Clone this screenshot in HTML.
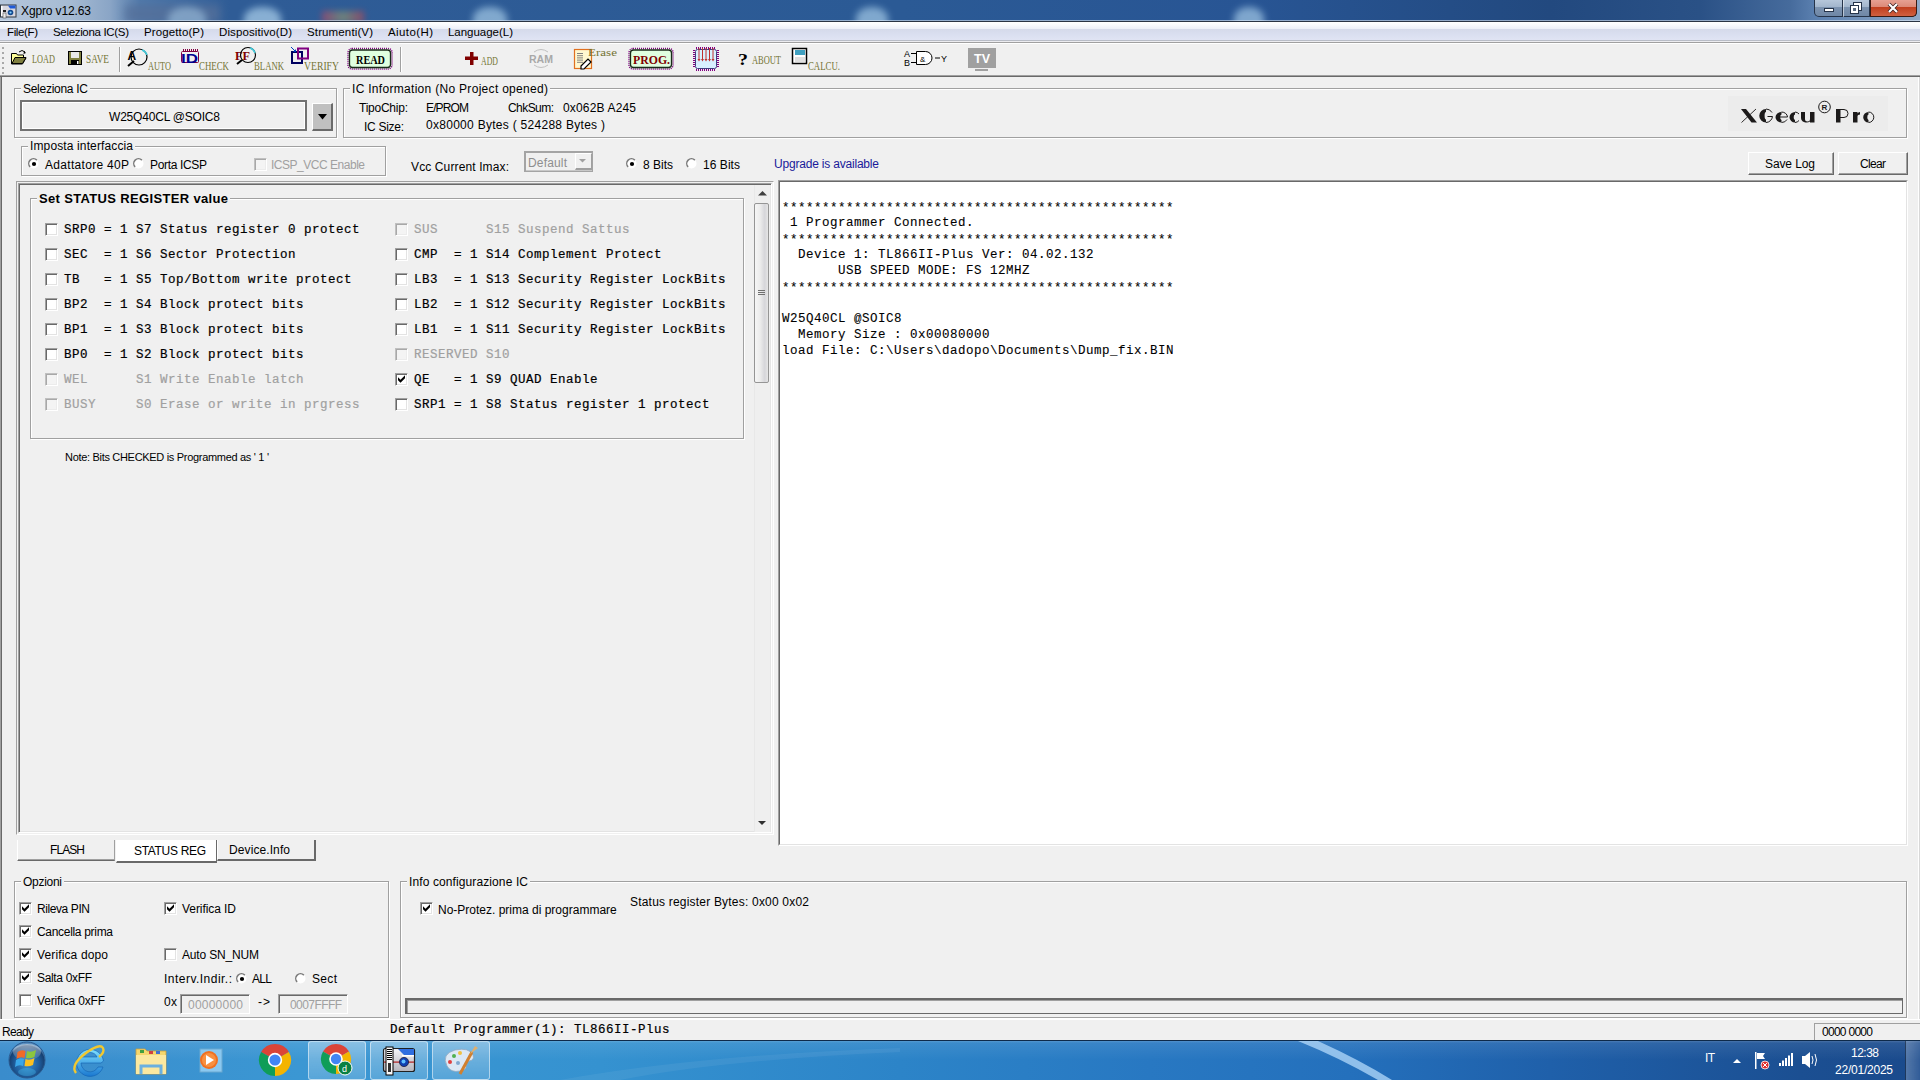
<!DOCTYPE html>
<html><head><meta charset="utf-8"><style>
html,body{margin:0;padding:0;width:1920px;height:1080px;overflow:hidden;background:#f0f0f0;position:relative;font-family:"Liberation Sans",sans-serif}
body>div,body>svg{position:absolute}
.t{white-space:pre;line-height:normal}
</style></head><body>
<div style="left:0;top:0;width:1920px;height:21px;background:linear-gradient(90deg,#b4c6db 0px,#a6bbd3 70px,#8aa5c6 110px,#5079aa 140px,#2f5c96 230px,#2b5a95 900px,#285594 1250px,#22497f 1550px,#2a5186 1700px,#466b9c 1790px,#5a7faf 1814px,#8fa9c8 1920px)"></div>
<div style="left:125px;top:5px;width:95px;height:18px;filter:blur(4px);background:#55709a;opacity:0.8"></div>
<div style="left:168px;top:7px;width:38px;height:22px;border-radius:50% 50% 0 0;filter:blur(3.5px);opacity:0.45;background:#b8dcf4"></div>
<div style="left:244px;top:7px;width:37px;height:22px;border-radius:50% 50% 0 0;filter:blur(3.5px);opacity:0.65;background:#b8dcf4"></div>
<div style="left:473px;top:7px;width:34px;height:22px;border-radius:50% 50% 0 0;filter:blur(3.5px);opacity:0.6;background:#b8dcf4"></div>
<div style="left:856px;top:7px;width:32px;height:22px;border-radius:50% 50% 0 0;filter:blur(3.5px);opacity:0.6;background:#b8dcf4"></div>
<div style="left:1234px;top:7px;width:30px;height:22px;border-radius:50% 50% 0 0;filter:blur(3.5px);opacity:0.6;background:#b8dcf4"></div>
<div style="left:322px;top:11px;width:42px;height:12px;filter:blur(3px);opacity:0.6;background:linear-gradient(90deg,#c04060,#90a070 50%,#c04050)"></div>
<div style="left:0px;top:20px;width:1920px;height:1px;background:rgba(220,232,245,0.6)"></div>
<div style="left:0px;top:21px;width:1920px;height:1px;background:#2a3444"></div>
<div style="left:1814px;top:-1px;width:103px;height:18px;border:1px solid #26344a;border-top:none;border-radius:0 0 5px 5px;box-sizing:border-box;overflow:hidden;background:linear-gradient(180deg,#b9c9dc 0,#a3b6cd 45%,#7c93b0 50%,#6f87a6 100%)"></div>
<div style="left:1870px;top:-1px;width:47px;height:18px;border:1px solid #3a1a12;border-top:none;border-radius:0 0 5px 0;box-sizing:border-box;background:linear-gradient(180deg,#e8a496 0,#dc8a78 45%,#c1401f 50%,#d06040 100%)"></div>
<div style="left:1842px;top:0px;width:1px;height:17px;background:#26344a"></div>
<div style="left:1843px;top:0px;width:1px;height:17px;background:rgba(255,255,255,0.5)"></div>
<div style="left:1869px;top:0px;width:1px;height:17px;background:#26344a"></div>
<div style="left:1824px;top:8px;width:10px;height:4px;background:#fff;border:1px solid #26344a;box-sizing:border-box"></div>
<svg style="left:1850px;top:2px" width="12" height="12"><rect x="3.5" y="0.5" width="8" height="8" fill="#fff" stroke="#26344a"/><rect x="0.5" y="3.5" width="8" height="8" fill="#fff" stroke="#26344a"/><rect x="3" y="6" width="3" height="3" fill="#5a6a80"/></svg>
<svg style="left:1886px;top:2px" width="14" height="12"><path d="M3 2 L11 10 M11 2 L3 10" stroke="#3a2020" stroke-width="3.8"/><path d="M3 2 L11 10 M11 2 L3 10" stroke="#fff" stroke-width="2.2"/></svg>
<svg style="left:0;top:4px" width="18" height="16"><rect x="0.5" y="1" width="15.5" height="12" fill="#d8d8e0" stroke="#303840" stroke-width="1"/><path d="M8 1.5 h7.5 v3 h-5.5 Z" fill="#1e5ad8"/><circle cx="10.5" cy="8.5" r="2.8" fill="#124a90"/><circle cx="10.5" cy="8.5" r="1.1" fill="#80d0ff"/><rect x="1" y="2" width="1.5" height="10" fill="#fff"/><rect x="3" y="6" width="3" height="2" fill="#202020"/><rect x="3" y="9" width="3" height="5" fill="#e8e8e8" stroke="#404040" stroke-width="0.5"/></svg>
<div class="t" style="left:21px;top:4px;font-family:'Liberation Sans';font-size:12px;font-weight:normal;color:#000;letter-spacing:-0.126px;">Xgpro v12.63</div>
<div style="left:0px;top:22px;width:1920px;height:7px;background:linear-gradient(180deg,#ffffff 0%,#fbfcfe 30%,#eceff8 100%)"></div>
<div style="left:0px;top:29px;width:1920px;height:11px;background:linear-gradient(180deg,#d5daea 0%,#dadff0 50%,#e0e4f3 100%)"></div>
<div style="left:0px;top:40px;width:1920px;height:1px;background:#b8bcc6"></div>
<div style="left:0px;top:41px;width:1920px;height:1px;background:#ececf0"></div>
<div style="left:0px;top:42px;width:1920px;height:1px;background:#a0a0a0"></div>
<div class="t" style="left:7px;top:26px;font-family:'Liberation Sans';font-size:11.5px;font-weight:normal;color:#000;letter-spacing:-0.370px;">File(F)</div>
<div class="t" style="left:53px;top:26px;font-family:'Liberation Sans';font-size:11.5px;font-weight:normal;color:#000;letter-spacing:-0.325px;">Seleziona IC(S)</div>
<div class="t" style="left:144px;top:26px;font-family:'Liberation Sans';font-size:11.5px;font-weight:normal;color:#000;letter-spacing:0.119px;">Progetto(P)</div>
<div class="t" style="left:219px;top:26px;font-family:'Liberation Sans';font-size:11.5px;font-weight:normal;color:#000;letter-spacing:0.109px;">Dispositivo(D)</div>
<div class="t" style="left:307px;top:26px;font-family:'Liberation Sans';font-size:11.5px;font-weight:normal;color:#000;letter-spacing:0.132px;">Strumenti(V)</div>
<div class="t" style="left:388px;top:26px;font-family:'Liberation Sans';font-size:11.5px;font-weight:normal;color:#000;letter-spacing:0.402px;">Aiuto(H)</div>
<div class="t" style="left:448px;top:26px;font-family:'Liberation Sans';font-size:11.5px;font-weight:normal;color:#000;letter-spacing:-0.023px;">Language(L)</div>
<div style="left:0px;top:43px;width:1920px;height:33px;background:#f0f0f0"></div>
<div style="left:0px;top:43px;width:1920px;height:1px;background:#fff"></div>
<div style="left:0px;top:75px;width:1920px;height:1px;background:#a0a0a0"></div>
<div style="left:0px;top:76px;width:1920px;height:1px;background:#696969"></div>
<div style="left:2px;top:47px;width:2px;height:2px;background:#a8a8a8"></div>
<div style="left:2px;top:52px;width:2px;height:2px;background:#a8a8a8"></div>
<div style="left:2px;top:57px;width:2px;height:2px;background:#a8a8a8"></div>
<div style="left:2px;top:62px;width:2px;height:2px;background:#a8a8a8"></div>
<div style="left:2px;top:67px;width:2px;height:2px;background:#a8a8a8"></div>
<div style="left:2px;top:72px;width:2px;height:2px;background:#a8a8a8"></div>
<div style="left:119px;top:47px;width:1px;height:25px;background:#a0a0a0"></div>
<div style="left:120px;top:47px;width:1px;height:25px;background:#fff"></div>
<div style="left:400px;top:47px;width:1px;height:25px;background:#a0a0a0"></div>
<div style="left:401px;top:47px;width:1px;height:25px;background:#fff"></div>
<div style="left:0px;top:77px;width:1920px;height:943px;background:#f0f0f0"></div>
<div style="left:1918px;top:77px;width:1px;height:943px;background:#fff"></div>
<div style="left:1919px;top:77px;width:1px;height:943px;background:#d8d8d8"></div>
<div style="left:0px;top:77px;width:1px;height:942px;background:#a0a0a0"></div>
<div style="left:1px;top:77px;width:1px;height:942px;background:#696969"></div>
<div style="left:15px;top:89px;width:323px;height:50px;border:1px solid #fff;box-sizing:border-box"></div>
<div style="left:14px;top:88px;width:323px;height:50px;border:1px solid #a0a0a0;box-sizing:border-box"></div>
<div style="left:21px;top:86px;width:69px;height:5px;background:#f0f0f0"></div>
<div class="t" style="left:23px;top:82px;font-family:'Liberation Sans';font-size:12px;font-weight:normal;color:#000;letter-spacing:-0.277px;">Seleziona IC</div>
<div style="left:20px;top:100px;width:287px;height:31px;background:#f0f0f0;border:2px solid #727272;box-sizing:border-box;box-shadow:inset 1px 1px 0 #fff, inset -1px -1px 0 #fff"></div>
<div class="t" style="left:109px;top:110px;font-family:'Liberation Sans';font-size:12px;font-weight:normal;color:#000;letter-spacing:-0.199px;">W25Q40CL @SOIC8</div>
<div style="left:312px;top:103px;width:21px;height:28px;background:#c0c0c0;border-left:1px solid #fff;border-top:1px solid #fff;border-right:2px solid #6a6a6a;border-bottom:2px solid #6a6a6a;box-sizing:border-box"></div>
<svg style="left:318px;top:114px" width="10" height="6"><path d="M0 0 L9 0 L4.5 5.5 Z" fill="#000"/></svg>
<div style="left:344px;top:89px;width:1564px;height:50px;border:1px solid #fff;box-sizing:border-box"></div>
<div style="left:343px;top:88px;width:1564px;height:50px;border:1px solid #a0a0a0;box-sizing:border-box"></div>
<div style="left:350px;top:86px;width:200px;height:5px;background:#f0f0f0"></div>
<div class="t" style="left:352px;top:82px;font-family:'Liberation Sans';font-size:12px;font-weight:normal;color:#000;letter-spacing:0.300px;">IC Information (No Project opened)</div>
<div class="t" style="left:359px;top:101px;font-family:'Liberation Sans';font-size:12px;font-weight:normal;color:#000;letter-spacing:-0.240px;">TipoChip:</div>
<div class="t" style="left:426px;top:101px;font-family:'Liberation Sans';font-size:12px;font-weight:normal;color:#000;letter-spacing:-0.869px;">E/PROM</div>
<div class="t" style="left:508px;top:101px;font-family:'Liberation Sans';font-size:12px;font-weight:normal;color:#000;letter-spacing:-0.560px;">ChkSum:</div>
<div class="t" style="left:563px;top:101px;font-family:'Liberation Sans';font-size:12px;font-weight:normal;color:#000;letter-spacing:0.159px;">0x062B A245</div>
<div class="t" style="left:364px;top:120px;font-family:'Liberation Sans';font-size:12px;font-weight:normal;color:#000;letter-spacing:-0.288px;">IC Size:</div>
<div class="t" style="left:426px;top:118px;font-family:'Liberation Sans';font-size:12px;font-weight:normal;color:#000;letter-spacing:0.283px;">0x80000 Bytes ( 524288 Bytes )</div>
<div style="left:1728px;top:96px;width:160px;height:35px;background:#ececec"></div>
<div style="left:22px;top:147px;width:365px;height:30px;border:1px solid #fff;box-sizing:border-box"></div>
<div style="left:21px;top:146px;width:365px;height:30px;border:1px solid #a0a0a0;box-sizing:border-box"></div>
<div style="left:28px;top:144px;width:107px;height:5px;background:#f0f0f0"></div>
<div class="t" style="left:30px;top:139px;font-family:'Liberation Sans';font-size:12px;font-weight:normal;color:#000;letter-spacing:0.127px;">Imposta interfaccia</div>
<svg style="left:28px;top:158px" width="12" height="12"><circle cx="5.5" cy="5.5" r="5" fill="#fff"/><path d="M2.14 8.86 A4.75 4.75 0 0 1 8.86 2.14" stroke="#7a7a7a" stroke-width="1.5" fill="none"/><circle cx="6" cy="6" r="2.1" fill="#000"/></svg>
<div class="t" style="left:45px;top:158px;font-family:'Liberation Sans';font-size:12px;font-weight:normal;color:#000;letter-spacing:0.303px;">Adattatore 40P</div>
<svg style="left:133px;top:158px" width="12" height="12"><circle cx="5.5" cy="5.5" r="5" fill="#fff"/><path d="M2.14 8.86 A4.75 4.75 0 0 1 8.86 2.14" stroke="#7a7a7a" stroke-width="1.5" fill="none"/></svg>
<div class="t" style="left:150px;top:158px;font-family:'Liberation Sans';font-size:12px;font-weight:normal;color:#000;letter-spacing:-0.337px;">Porta ICSP</div>
<div style="left:254px;top:158px;width:13px;height:13px;background:#f4f4f4;border-left:1px solid #c0c0c0;border-top:1px solid #c0c0c0;border-right:1px solid #fff;border-bottom:1px solid #fff;box-sizing:border-box;box-shadow:inset 1px 1px 0 #a8a8a8, inset -1px -1px 0 #ececec"></div>
<div class="t" style="left:271px;top:158px;font-family:'Liberation Sans';font-size:12px;font-weight:normal;color:#a0a0a0;letter-spacing:-0.480px;">ICSP_VCC Enable</div>
<div class="t" style="left:411px;top:160px;font-family:'Liberation Sans';font-size:12px;font-weight:normal;color:#000;letter-spacing:0.123px;">Vcc Current Imax:</div>
<div style="left:524px;top:151px;width:69px;height:21px;background:#f0f0f0;border:2px solid #a4a4a4;border-right-width:1px;border-bottom-width:1px;box-sizing:border-box;box-shadow:inset -1px -1px 0 #c8c8c8"></div>
<div class="t" style="left:528px;top:156px;font-family:'Liberation Sans';font-size:12px;font-weight:normal;color:#8e8e8e;letter-spacing:0.161px;">Default</div>
<div style="left:575px;top:153px;width:17px;height:17px;border-left:1px solid #fff;border-top:1px solid #fff;border-bottom:2px solid #a0a0a0;border-right:1px solid #a0a0a0;box-sizing:border-box"></div>
<svg style="left:579px;top:159px" width="8" height="5"><path d="M0 0 L7 0 L3.5 3.5 Z" fill="#a0a0a0"/></svg>
<svg style="left:626px;top:158px" width="12" height="12"><circle cx="5.5" cy="5.5" r="5" fill="#fff"/><path d="M2.14 8.86 A4.75 4.75 0 0 1 8.86 2.14" stroke="#7a7a7a" stroke-width="1.5" fill="none"/><circle cx="6" cy="6" r="2.1" fill="#000"/></svg>
<div class="t" style="left:643px;top:158px;font-family:'Liberation Sans';font-size:12px;font-weight:normal;color:#000;">8 Bits</div>
<svg style="left:686px;top:158px" width="12" height="12"><circle cx="5.5" cy="5.5" r="5" fill="#fff"/><path d="M2.14 8.86 A4.75 4.75 0 0 1 8.86 2.14" stroke="#7a7a7a" stroke-width="1.5" fill="none"/></svg>
<div class="t" style="left:703px;top:158px;font-family:'Liberation Sans';font-size:12px;font-weight:normal;color:#000;letter-spacing:0.052px;">16 Bits</div>
<div class="t" style="left:774px;top:157px;font-family:'Liberation Sans';font-size:12px;font-weight:normal;color:#1a1a9a;letter-spacing:-0.197px;">Upgrade is available</div>
<div style="left:1748px;top:152px;width:86px;height:23px;background:#f0f0f0;border-top:1px solid #fff;border-left:1px solid #fff;border-right:1px solid #696969;border-bottom:1px solid #696969;box-sizing:border-box;box-shadow:inset -1px -1px 0 #a0a0a0"></div>
<div class="t" style="left:1765px;top:157px;font-family:'Liberation Sans';font-size:12px;font-weight:normal;color:#000;letter-spacing:-0.103px;">Save Log</div>
<div style="left:1838px;top:152px;width:70px;height:23px;background:#f0f0f0;border-top:1px solid #fff;border-left:1px solid #fff;border-right:1px solid #696969;border-bottom:1px solid #696969;box-sizing:border-box;box-shadow:inset -1px -1px 0 #a0a0a0"></div>
<div class="t" style="left:1860px;top:157px;font-family:'Liberation Sans';font-size:12px;font-weight:normal;color:#000;letter-spacing:-0.672px;">Clear</div>
<div style="left:16px;top:181px;width:758px;height:654px;border-top:1px solid #a0a0a0;border-left:1px solid #a0a0a0;border-right:1px solid #fff;border-bottom:1px solid #fff;box-sizing:border-box"></div>
<div style="left:18px;top:183px;width:754px;height:650px;border-top:1px solid #a0a0a0;border-left:1px solid #a0a0a0;border-right:1px solid #fff;border-bottom:1px solid #fff;box-sizing:border-box;box-shadow:inset 1px 1px 0 #696969, inset -1px -1px 0 #e3e3e3"></div>
<div style="left:754px;top:185px;width:17px;height:647px;background:#efefef;border-left:1px solid #e8e8e8;border-right:1px solid #e6e6e6;box-sizing:border-box"></div>
<div style="left:754px;top:203px;width:15px;height:180px;background:linear-gradient(90deg,#f6f6f6 0,#ececec 40%,#d6d6da 75%,#e6e6e6);border:1px solid #959595;border-radius:2px;box-sizing:border-box"></div>
<svg style="left:758px;top:191px" width="9" height="5"><path d="M0 4.5 L4.5 0 L9 4.5 Z" fill="#404040"/></svg>
<svg style="left:758px;top:821px" width="9" height="5"><path d="M0 0 L8 0 L4 4 Z" fill="#303030"/></svg>
<div style="left:758px;top:290px;width:7px;height:1px;background:#707070"></div>
<div style="left:758px;top:292px;width:7px;height:1px;background:#707070"></div>
<div style="left:758px;top:294px;width:7px;height:1px;background:#707070"></div>
<div style="left:31px;top:199px;width:714px;height:241px;border:1px solid #fff;box-sizing:border-box"></div>
<div style="left:30px;top:198px;width:714px;height:241px;border:1px solid #a0a0a0;box-sizing:border-box"></div>
<div style="left:37px;top:196px;width:193px;height:5px;background:#f0f0f0"></div>
<div class="t" style="left:39px;top:191px;font-family:'Liberation Sans';font-size:13px;font-weight:bold;color:#000;letter-spacing:0.340px;">Set STATUS REGISTER value</div>
<div style="left:45px;top:223px;width:13px;height:13px;background:#fff;border-left:1px solid #a0a0a0;border-top:1px solid #a0a0a0;border-right:1px solid #fff;border-bottom:1px solid #fff;box-sizing:border-box;box-shadow:inset 1px 1px 0 #696969, inset -1px -1px 0 #e3e3e3"></div>
<div class="t" style="left:64px;top:223px;font-family:'Liberation Mono';font-size:12.5px;font-weight:normal;color:#000;-webkit-text-stroke:0.2px currentColor;letter-spacing:0.5px;">SRP0 = 1 S7 Status register 0 protect</div>
<div style="left:45px;top:248px;width:13px;height:13px;background:#fff;border-left:1px solid #a0a0a0;border-top:1px solid #a0a0a0;border-right:1px solid #fff;border-bottom:1px solid #fff;box-sizing:border-box;box-shadow:inset 1px 1px 0 #696969, inset -1px -1px 0 #e3e3e3"></div>
<div class="t" style="left:64px;top:248px;font-family:'Liberation Mono';font-size:12.5px;font-weight:normal;color:#000;-webkit-text-stroke:0.2px currentColor;letter-spacing:0.5px;">SEC  = 1 S6 Sector Protection</div>
<div style="left:45px;top:273px;width:13px;height:13px;background:#fff;border-left:1px solid #a0a0a0;border-top:1px solid #a0a0a0;border-right:1px solid #fff;border-bottom:1px solid #fff;box-sizing:border-box;box-shadow:inset 1px 1px 0 #696969, inset -1px -1px 0 #e3e3e3"></div>
<div class="t" style="left:64px;top:273px;font-family:'Liberation Mono';font-size:12.5px;font-weight:normal;color:#000;-webkit-text-stroke:0.2px currentColor;letter-spacing:0.5px;">TB   = 1 S5 Top/Bottom write protect</div>
<div style="left:45px;top:298px;width:13px;height:13px;background:#fff;border-left:1px solid #a0a0a0;border-top:1px solid #a0a0a0;border-right:1px solid #fff;border-bottom:1px solid #fff;box-sizing:border-box;box-shadow:inset 1px 1px 0 #696969, inset -1px -1px 0 #e3e3e3"></div>
<div class="t" style="left:64px;top:298px;font-family:'Liberation Mono';font-size:12.5px;font-weight:normal;color:#000;-webkit-text-stroke:0.2px currentColor;letter-spacing:0.5px;">BP2  = 1 S4 Block protect bits</div>
<div style="left:45px;top:323px;width:13px;height:13px;background:#fff;border-left:1px solid #a0a0a0;border-top:1px solid #a0a0a0;border-right:1px solid #fff;border-bottom:1px solid #fff;box-sizing:border-box;box-shadow:inset 1px 1px 0 #696969, inset -1px -1px 0 #e3e3e3"></div>
<div class="t" style="left:64px;top:323px;font-family:'Liberation Mono';font-size:12.5px;font-weight:normal;color:#000;-webkit-text-stroke:0.2px currentColor;letter-spacing:0.5px;">BP1  = 1 S3 Block protect bits</div>
<div style="left:45px;top:348px;width:13px;height:13px;background:#fff;border-left:1px solid #a0a0a0;border-top:1px solid #a0a0a0;border-right:1px solid #fff;border-bottom:1px solid #fff;box-sizing:border-box;box-shadow:inset 1px 1px 0 #696969, inset -1px -1px 0 #e3e3e3"></div>
<div class="t" style="left:64px;top:348px;font-family:'Liberation Mono';font-size:12.5px;font-weight:normal;color:#000;-webkit-text-stroke:0.2px currentColor;letter-spacing:0.5px;">BP0  = 1 S2 Block protect bits</div>
<div style="left:45px;top:373px;width:13px;height:13px;background:#f4f4f4;border-left:1px solid #c0c0c0;border-top:1px solid #c0c0c0;border-right:1px solid #fff;border-bottom:1px solid #fff;box-sizing:border-box;box-shadow:inset 1px 1px 0 #a8a8a8, inset -1px -1px 0 #ececec"></div>
<div class="t" style="left:64px;top:373px;font-family:'Liberation Mono';font-size:12.5px;font-weight:normal;color:#a0a0a0;-webkit-text-stroke:0.2px currentColor;letter-spacing:0.5px;">WEL      S1 Write Enable latch</div>
<div style="left:45px;top:398px;width:13px;height:13px;background:#f4f4f4;border-left:1px solid #c0c0c0;border-top:1px solid #c0c0c0;border-right:1px solid #fff;border-bottom:1px solid #fff;box-sizing:border-box;box-shadow:inset 1px 1px 0 #a8a8a8, inset -1px -1px 0 #ececec"></div>
<div class="t" style="left:64px;top:398px;font-family:'Liberation Mono';font-size:12.5px;font-weight:normal;color:#a0a0a0;-webkit-text-stroke:0.2px currentColor;letter-spacing:0.5px;">BUSY     S0 Erase or write in prgress</div>
<div style="left:395px;top:223px;width:13px;height:13px;background:#f4f4f4;border-left:1px solid #c0c0c0;border-top:1px solid #c0c0c0;border-right:1px solid #fff;border-bottom:1px solid #fff;box-sizing:border-box;box-shadow:inset 1px 1px 0 #a8a8a8, inset -1px -1px 0 #ececec"></div>
<div class="t" style="left:414px;top:223px;font-family:'Liberation Mono';font-size:12.5px;font-weight:normal;color:#a0a0a0;-webkit-text-stroke:0.2px currentColor;letter-spacing:0.5px;">SUS      S15 Suspend Sattus</div>
<div style="left:395px;top:248px;width:13px;height:13px;background:#fff;border-left:1px solid #a0a0a0;border-top:1px solid #a0a0a0;border-right:1px solid #fff;border-bottom:1px solid #fff;box-sizing:border-box;box-shadow:inset 1px 1px 0 #696969, inset -1px -1px 0 #e3e3e3"></div>
<div class="t" style="left:414px;top:248px;font-family:'Liberation Mono';font-size:12.5px;font-weight:normal;color:#000;-webkit-text-stroke:0.2px currentColor;letter-spacing:0.5px;">CMP  = 1 S14 Complement Protect</div>
<div style="left:395px;top:273px;width:13px;height:13px;background:#fff;border-left:1px solid #a0a0a0;border-top:1px solid #a0a0a0;border-right:1px solid #fff;border-bottom:1px solid #fff;box-sizing:border-box;box-shadow:inset 1px 1px 0 #696969, inset -1px -1px 0 #e3e3e3"></div>
<div class="t" style="left:414px;top:273px;font-family:'Liberation Mono';font-size:12.5px;font-weight:normal;color:#000;-webkit-text-stroke:0.2px currentColor;letter-spacing:0.5px;">LB3  = 1 S13 Security Register LockBits</div>
<div style="left:395px;top:298px;width:13px;height:13px;background:#fff;border-left:1px solid #a0a0a0;border-top:1px solid #a0a0a0;border-right:1px solid #fff;border-bottom:1px solid #fff;box-sizing:border-box;box-shadow:inset 1px 1px 0 #696969, inset -1px -1px 0 #e3e3e3"></div>
<div class="t" style="left:414px;top:298px;font-family:'Liberation Mono';font-size:12.5px;font-weight:normal;color:#000;-webkit-text-stroke:0.2px currentColor;letter-spacing:0.5px;">LB2  = 1 S12 Security Register LockBits</div>
<div style="left:395px;top:323px;width:13px;height:13px;background:#fff;border-left:1px solid #a0a0a0;border-top:1px solid #a0a0a0;border-right:1px solid #fff;border-bottom:1px solid #fff;box-sizing:border-box;box-shadow:inset 1px 1px 0 #696969, inset -1px -1px 0 #e3e3e3"></div>
<div class="t" style="left:414px;top:323px;font-family:'Liberation Mono';font-size:12.5px;font-weight:normal;color:#000;-webkit-text-stroke:0.2px currentColor;letter-spacing:0.5px;">LB1  = 1 S11 Security Register LockBits</div>
<div style="left:395px;top:348px;width:13px;height:13px;background:#f4f4f4;border-left:1px solid #c0c0c0;border-top:1px solid #c0c0c0;border-right:1px solid #fff;border-bottom:1px solid #fff;box-sizing:border-box;box-shadow:inset 1px 1px 0 #a8a8a8, inset -1px -1px 0 #ececec"></div>
<div class="t" style="left:414px;top:348px;font-family:'Liberation Mono';font-size:12.5px;font-weight:normal;color:#a0a0a0;-webkit-text-stroke:0.2px currentColor;letter-spacing:0.5px;">RESERVED S10</div>
<div style="left:395px;top:373px;width:13px;height:13px;background:#fff;border-left:1px solid #a0a0a0;border-top:1px solid #a0a0a0;border-right:1px solid #fff;border-bottom:1px solid #fff;box-sizing:border-box;box-shadow:inset 1px 1px 0 #696969, inset -1px -1px 0 #e3e3e3"></div>
<svg style="left:395px;top:373px" width="13" height="13"><path d="M3 4.2 L5.5 6.7 L10 2.2 L10 5.2 L5.5 9.7 L3 7.2 Z" fill="#000"/></svg>
<div class="t" style="left:414px;top:373px;font-family:'Liberation Mono';font-size:12.5px;font-weight:normal;color:#000;-webkit-text-stroke:0.2px currentColor;letter-spacing:0.5px;">QE   = 1 S9 QUAD Enable</div>
<div style="left:395px;top:398px;width:13px;height:13px;background:#fff;border-left:1px solid #a0a0a0;border-top:1px solid #a0a0a0;border-right:1px solid #fff;border-bottom:1px solid #fff;box-sizing:border-box;box-shadow:inset 1px 1px 0 #696969, inset -1px -1px 0 #e3e3e3"></div>
<div class="t" style="left:414px;top:398px;font-family:'Liberation Mono';font-size:12.5px;font-weight:normal;color:#000;-webkit-text-stroke:0.2px currentColor;letter-spacing:0.5px;">SRP1 = 1 S8 Status register 1 protect</div>
<div class="t" style="left:65px;top:451px;font-family:'Liberation Sans';font-size:11px;font-weight:normal;color:#000;letter-spacing:-0.308px;">Note: Bits CHECKED is Programmed as &#x27; 1 &#x27;</div>
<div style="left:17px;top:840px;width:98px;height:21px;background:#f0f0f0;border-left:1px solid #fff;border-bottom:1px solid #696969;border-right:1px solid #a0a0a0;box-sizing:border-box;box-shadow:inset 0 -1px 0 #a0a0a0"></div>
<div class="t" style="left:50px;top:843px;font-family:'Liberation Sans';font-size:12px;font-weight:normal;color:#000;letter-spacing:-0.922px;">FLASH</div>
<div style="left:116px;top:840px;width:101px;height:23px;background:#fff;border-left:1px solid #fff;border-bottom:2px solid #696969;border-right:1px solid #696969;box-sizing:border-box"></div>
<div class="t" style="left:134px;top:844px;font-family:'Liberation Sans';font-size:12px;font-weight:normal;color:#000;letter-spacing:-0.323px;">STATUS REG</div>
<div style="left:217px;top:840px;width:99px;height:21px;background:#f0f0f0;border-left:1px solid #fff;border-bottom:2px solid #696969;border-right:2px solid #696969;box-sizing:border-box"></div>
<div class="t" style="left:229px;top:843px;font-family:'Liberation Sans';font-size:12px;font-weight:normal;color:#000;letter-spacing:0.097px;">Device.Info</div>
<div style="left:778px;top:180px;width:1130px;height:666px;background:#fff;border-top:1px solid #a0a0a0;border-left:1px solid #a0a0a0;border-right:1px solid #fff;border-bottom:1px solid #fff;box-sizing:border-box"></div>
<div style="left:779px;top:181px;width:1128px;height:664px;border-top:1px solid #696969;border-left:1px solid #696969;border-right:1px solid #e3e3e3;border-bottom:1px solid #e3e3e3;box-sizing:border-box"></div>
<div class="t" style="left:782px;top:201px;font-family:'Liberation Mono';font-size:12.5px;font-weight:normal;color:#000;-webkit-text-stroke:0.1px currentColor;letter-spacing:0.5px;">*************************************************</div>
<div class="t" style="left:782px;top:216px;font-family:'Liberation Mono';font-size:12.5px;font-weight:normal;color:#000;-webkit-text-stroke:0.1px currentColor;letter-spacing:0.5px;"> 1 Programmer Connected.</div>
<div class="t" style="left:782px;top:233px;font-family:'Liberation Mono';font-size:12.5px;font-weight:normal;color:#000;-webkit-text-stroke:0.1px currentColor;letter-spacing:0.5px;">*************************************************</div>
<div class="t" style="left:782px;top:248px;font-family:'Liberation Mono';font-size:12.5px;font-weight:normal;color:#000;-webkit-text-stroke:0.1px currentColor;letter-spacing:0.5px;">  Device 1: TL866II-Plus Ver: 04.02.132</div>
<div class="t" style="left:782px;top:264px;font-family:'Liberation Mono';font-size:12.5px;font-weight:normal;color:#000;-webkit-text-stroke:0.1px currentColor;letter-spacing:0.5px;">       USB SPEED MODE: FS 12MHZ</div>
<div class="t" style="left:782px;top:281px;font-family:'Liberation Mono';font-size:12.5px;font-weight:normal;color:#000;-webkit-text-stroke:0.1px currentColor;letter-spacing:0.5px;">*************************************************</div>
<div class="t" style="left:782px;top:312px;font-family:'Liberation Mono';font-size:12.5px;font-weight:normal;color:#000;-webkit-text-stroke:0.1px currentColor;letter-spacing:0.5px;">W25Q40CL @SOIC8</div>
<div class="t" style="left:782px;top:328px;font-family:'Liberation Mono';font-size:12.5px;font-weight:normal;color:#000;-webkit-text-stroke:0.1px currentColor;letter-spacing:0.5px;">  Memory Size : 0x00080000</div>
<div class="t" style="left:782px;top:344px;font-family:'Liberation Mono';font-size:12.5px;font-weight:normal;color:#000;-webkit-text-stroke:0.1px currentColor;letter-spacing:0.5px;">load File: C:\Users\dadopo\Documents\Dump_fix.BIN</div>
<div style="left:15px;top:882px;width:375px;height:137px;border:1px solid #fff;box-sizing:border-box"></div>
<div style="left:14px;top:881px;width:375px;height:137px;border:1px solid #a0a0a0;box-sizing:border-box"></div>
<div style="left:21px;top:879px;width:43px;height:5px;background:#f0f0f0"></div>
<div class="t" style="left:23px;top:875px;font-family:'Liberation Sans';font-size:12px;font-weight:normal;color:#000;letter-spacing:-0.281px;">Opzioni</div>
<div style="left:19px;top:902px;width:13px;height:13px;background:#fff;border-left:1px solid #a0a0a0;border-top:1px solid #a0a0a0;border-right:1px solid #fff;border-bottom:1px solid #fff;box-sizing:border-box;box-shadow:inset 1px 1px 0 #696969, inset -1px -1px 0 #e3e3e3"></div>
<svg style="left:19px;top:902px" width="13" height="13"><path d="M3 4.2 L5.5 6.7 L10 2.2 L10 5.2 L5.5 9.7 L3 7.2 Z" fill="#000"/></svg>
<div class="t" style="left:37px;top:902px;font-family:'Liberation Sans';font-size:12px;font-weight:normal;color:#000;letter-spacing:-0.410px;">Rileva PIN</div>
<div style="left:19px;top:925px;width:13px;height:13px;background:#fff;border-left:1px solid #a0a0a0;border-top:1px solid #a0a0a0;border-right:1px solid #fff;border-bottom:1px solid #fff;box-sizing:border-box;box-shadow:inset 1px 1px 0 #696969, inset -1px -1px 0 #e3e3e3"></div>
<svg style="left:19px;top:925px" width="13" height="13"><path d="M3 4.2 L5.5 6.7 L10 2.2 L10 5.2 L5.5 9.7 L3 7.2 Z" fill="#000"/></svg>
<div class="t" style="left:37px;top:925px;font-family:'Liberation Sans';font-size:12px;font-weight:normal;color:#000;letter-spacing:-0.311px;">Cancella prima</div>
<div style="left:19px;top:948px;width:13px;height:13px;background:#fff;border-left:1px solid #a0a0a0;border-top:1px solid #a0a0a0;border-right:1px solid #fff;border-bottom:1px solid #fff;box-sizing:border-box;box-shadow:inset 1px 1px 0 #696969, inset -1px -1px 0 #e3e3e3"></div>
<svg style="left:19px;top:948px" width="13" height="13"><path d="M3 4.2 L5.5 6.7 L10 2.2 L10 5.2 L5.5 9.7 L3 7.2 Z" fill="#000"/></svg>
<div class="t" style="left:37px;top:948px;font-family:'Liberation Sans';font-size:12px;font-weight:normal;color:#000;letter-spacing:0.134px;">Verifica dopo</div>
<div style="left:19px;top:971px;width:13px;height:13px;background:#fff;border-left:1px solid #a0a0a0;border-top:1px solid #a0a0a0;border-right:1px solid #fff;border-bottom:1px solid #fff;box-sizing:border-box;box-shadow:inset 1px 1px 0 #696969, inset -1px -1px 0 #e3e3e3"></div>
<svg style="left:19px;top:971px" width="13" height="13"><path d="M3 4.2 L5.5 6.7 L10 2.2 L10 5.2 L5.5 9.7 L3 7.2 Z" fill="#000"/></svg>
<div class="t" style="left:37px;top:971px;font-family:'Liberation Sans';font-size:12px;font-weight:normal;color:#000;letter-spacing:-0.337px;">Salta 0xFF</div>
<div style="left:19px;top:994px;width:13px;height:13px;background:#fff;border-left:1px solid #a0a0a0;border-top:1px solid #a0a0a0;border-right:1px solid #fff;border-bottom:1px solid #fff;box-sizing:border-box;box-shadow:inset 1px 1px 0 #696969, inset -1px -1px 0 #e3e3e3"></div>
<div class="t" style="left:37px;top:994px;font-family:'Liberation Sans';font-size:12px;font-weight:normal;color:#000;letter-spacing:-0.169px;">Verifica 0xFF</div>
<div style="left:164px;top:902px;width:13px;height:13px;background:#fff;border-left:1px solid #a0a0a0;border-top:1px solid #a0a0a0;border-right:1px solid #fff;border-bottom:1px solid #fff;box-sizing:border-box;box-shadow:inset 1px 1px 0 #696969, inset -1px -1px 0 #e3e3e3"></div>
<svg style="left:164px;top:902px" width="13" height="13"><path d="M3 4.2 L5.5 6.7 L10 2.2 L10 5.2 L5.5 9.7 L3 7.2 Z" fill="#000"/></svg>
<div class="t" style="left:182px;top:902px;font-family:'Liberation Sans';font-size:12px;font-weight:normal;color:#000;letter-spacing:-0.069px;">Verifica ID</div>
<div style="left:164px;top:948px;width:13px;height:13px;background:#fff;border-left:1px solid #a0a0a0;border-top:1px solid #a0a0a0;border-right:1px solid #fff;border-bottom:1px solid #fff;box-sizing:border-box;box-shadow:inset 1px 1px 0 #696969, inset -1px -1px 0 #e3e3e3"></div>
<div class="t" style="left:182px;top:948px;font-family:'Liberation Sans';font-size:12px;font-weight:normal;color:#000;letter-spacing:-0.170px;">Auto SN_NUM</div>
<div class="t" style="left:164px;top:972px;font-family:'Liberation Sans';font-size:12px;font-weight:normal;color:#000;letter-spacing:0.476px;">Interv.Indir.:</div>
<svg style="left:236px;top:973px" width="12" height="12"><circle cx="5.5" cy="5.5" r="5" fill="#fff"/><path d="M2.14 8.86 A4.75 4.75 0 0 1 8.86 2.14" stroke="#7a7a7a" stroke-width="1.5" fill="none"/><circle cx="6" cy="6" r="2.1" fill="#000"/></svg>
<div class="t" style="left:252px;top:972px;font-family:'Liberation Sans';font-size:12px;font-weight:normal;color:#000;letter-spacing:-0.680px;">ALL</div>
<svg style="left:295px;top:973px" width="12" height="12"><circle cx="5.5" cy="5.5" r="5" fill="#fff"/><path d="M2.14 8.86 A4.75 4.75 0 0 1 8.86 2.14" stroke="#7a7a7a" stroke-width="1.5" fill="none"/></svg>
<div class="t" style="left:312px;top:972px;font-family:'Liberation Sans';font-size:12px;font-weight:normal;color:#000;letter-spacing:0.328px;">Sect</div>
<div class="t" style="left:164px;top:995px;font-family:'Liberation Sans';font-size:12px;font-weight:normal;color:#000;letter-spacing:0.312px;">0x</div>
<div style="left:180px;top:994px;width:70px;height:20px;background:#f0f0f0;border-top:1px solid #a0a0a0;border-left:1px solid #a0a0a0;border-right:1px solid #fff;border-bottom:1px solid #fff;box-sizing:border-box;box-shadow:inset 1px 1px 0 #696969"></div>
<div class="t" style="left:188px;top:998px;font-family:'Liberation Sans';font-size:12px;font-weight:normal;color:#a0a0a0;letter-spacing:0.230px;">00000000</div>
<div class="t" style="left:258px;top:995px;font-family:'Liberation Sans';font-size:12px;font-weight:normal;color:#000;letter-spacing:0.984px;">-&gt;</div>
<div style="left:278px;top:994px;width:70px;height:20px;background:#f0f0f0;border-top:1px solid #a0a0a0;border-left:1px solid #a0a0a0;border-right:1px solid #fff;border-bottom:1px solid #fff;box-sizing:border-box;box-shadow:inset 1px 1px 0 #696969"></div>
<div class="t" style="left:290px;top:998px;font-family:'Liberation Sans';font-size:12px;font-weight:normal;color:#a0a0a0;letter-spacing:-0.574px;">0007FFFF</div>
<div style="left:401px;top:882px;width:1507px;height:137px;border:1px solid #fff;box-sizing:border-box"></div>
<div style="left:400px;top:881px;width:1507px;height:137px;border:1px solid #a0a0a0;box-sizing:border-box"></div>
<div style="left:407px;top:879px;width:123px;height:5px;background:#f0f0f0"></div>
<div class="t" style="left:409px;top:875px;font-family:'Liberation Sans';font-size:12px;font-weight:normal;color:#000;letter-spacing:0.107px;">Info configurazione IC</div>
<div style="left:420px;top:902px;width:13px;height:13px;background:#fff;border-left:1px solid #a0a0a0;border-top:1px solid #a0a0a0;border-right:1px solid #fff;border-bottom:1px solid #fff;box-sizing:border-box;box-shadow:inset 1px 1px 0 #696969, inset -1px -1px 0 #e3e3e3"></div>
<svg style="left:420px;top:902px" width="13" height="13"><path d="M3 4.2 L5.5 6.7 L10 2.2 L10 5.2 L5.5 9.7 L3 7.2 Z" fill="#000"/></svg>
<div class="t" style="left:438px;top:903px;font-family:'Liberation Sans';font-size:12px;font-weight:normal;color:#000;">No-Protez. prima di programmare</div>
<div class="t" style="left:630px;top:895px;font-family:'Liberation Sans';font-size:12px;font-weight:normal;color:#000;letter-spacing:0.201px;">Status register Bytes: 0x00 0x02</div>
<div style="left:405px;top:998px;width:1498px;height:16px;background:#f0f0f0;border-top:2px solid #696969;border-left:2px solid #696969;border-right:1px solid #696969;border-bottom:1px solid #696969;box-sizing:border-box;box-shadow:inset 1px 1px 0 #a0a0a0"></div>
<div style="left:0px;top:1019px;width:1920px;height:21px;background:#f0f0f0"></div>
<div style="left:0px;top:1019px;width:1920px;height:1px;background:#fff"></div>
<div class="t" style="left:2px;top:1025px;font-family:'Liberation Sans';font-size:12px;font-weight:normal;color:#000;letter-spacing:-0.672px;">Ready</div>
<div class="t" style="left:390px;top:1023px;font-family:'Liberation Mono';font-size:12.5px;font-weight:normal;color:#000;-webkit-text-stroke:0.2px currentColor;letter-spacing:0.5px;">Default Programmer(1): TL866II-Plus</div>
<div style="left:1814px;top:1023px;width:106px;height:17px;border-left:1px solid #a0a0a0;border-top:1px solid #a0a0a0;box-sizing:border-box"></div>
<div class="t" style="left:1822px;top:1025px;font-family:'Liberation Sans';font-size:12px;font-weight:normal;color:#000;letter-spacing:-0.717px;">0000 0000</div>
<div style="left:0px;top:1040px;width:1920px;height:40px;background:linear-gradient(90deg,#3a8ccc 0px,#3b97d3 300px,#3592d0 600px,#2c84c8 900px,#2878c2 1150px,#2470bc 1350px,#1f60aa 1550px,#1b4f92 1800px,#1a4a8c 1920px)"></div>
<div style="left:0px;top:1040px;width:1920px;height:40px;background:linear-gradient(180deg,rgba(255,255,255,0.25) 0,rgba(255,255,255,0.08) 3px,rgba(255,255,255,0) 20px)"></div>
<div style="left:0px;top:1040px;width:1920px;height:1px;background:#0e2a4a"></div>
<svg style="left:0;top:1040px" width="1920" height="40"><path d="M1298 1 L1318 1 Q1360 20 1392 40 L1378 40 Q1340 18 1298 1 Z" fill="rgba(190,225,255,0.7)"/><path d="M560 40 Q700 15 900 8 L900 12 Q720 20 620 40 Z" fill="rgba(255,255,255,0.06)"/></svg>
<div style="left:308px;top:1041px;width:58px;height:39px;background:linear-gradient(180deg,rgba(255,255,255,0.35),rgba(255,255,255,0.15));border:1px solid rgba(255,255,255,0.5);border-radius:3px;box-sizing:border-box"></div>
<div style="left:370px;top:1041px;width:58px;height:39px;background:linear-gradient(180deg,rgba(255,255,255,0.35),rgba(255,255,255,0.15));border:1px solid rgba(255,255,255,0.5);border-radius:3px;box-sizing:border-box"></div>
<div style="left:432px;top:1041px;width:58px;height:39px;background:linear-gradient(180deg,rgba(255,255,255,0.35),rgba(255,255,255,0.15));border:1px solid rgba(255,255,255,0.5);border-radius:3px;box-sizing:border-box"></div>
<div class="t" style="left:1705px;top:1051px;font-family:'Liberation Sans';font-size:12px;font-weight:normal;color:#fff;letter-spacing:-0.672px;">IT</div>
<div class="t" style="left:1851px;top:1046px;font-family:'Liberation Sans';font-size:12px;font-weight:normal;color:#fff;letter-spacing:-0.508px;">12:38</div>
<div class="t" style="left:1835px;top:1063px;font-family:'Liberation Sans';font-size:12px;font-weight:normal;color:#fff;letter-spacing:-0.229px;">22/01/2025</div>
<div style="left:1905px;top:1041px;width:15px;height:39px;background:linear-gradient(90deg,rgba(255,255,255,0.25),rgba(255,255,255,0.1));border-left:1px solid rgba(0,0,0,0.4);box-sizing:border-box"></div>
<svg style="left:0;top:0" width="1000" height="80"><path d="M11.5 53.5 h5 l1 1.5 h6 v3 h2.5 l-3.5 6 h-11 Z" fill="#ffff99" stroke="#000" stroke-width="1"/><path d="M12 63.5 l3 -6 h11 l-3.5 6 Z" fill="#808040" stroke="#000" stroke-width="1"/><path d="M19 52 q3 -3 6 0" stroke="#000" fill="none" stroke-width="1"/><path d="M24 51 l2 2 l-2.5 1 Z" fill="#000"/><text x="32" y="63" font-family="Liberation Serif" font-size="12.12" font-weight="normal" fill="#747434" textLength="23" lengthAdjust="spacingAndGlyphs">LOAD</text><rect x="68.5" y="51.5" width="13" height="13" fill="#808040" stroke="#000"/><rect x="71" y="52" width="8" height="6" fill="#e8e8e8"/><rect x="71" y="60" width="8" height="4.5" fill="#000"/><rect x="77" y="61" width="1.5" height="3" fill="#fff"/><text x="86" y="63" font-family="Liberation Serif" font-size="12.12" font-weight="normal" fill="#747434" textLength="23" lengthAdjust="spacingAndGlyphs">SAVE</text><circle cx="139" cy="57" r="8" fill="none" stroke="#000" stroke-width="1.2"/><path d="M142 50 a8 8 0 0 1 5 5" stroke="#40c8d8" stroke-width="1.5" fill="none"/><path d="M128 66 l6 -5" stroke="#000" stroke-width="2"/><text x="127.5" y="60" font-family="Liberation Sans" font-size="12" font-weight="bold" fill="#000">A</text><text x="148" y="70" font-family="Liberation Serif" font-size="12.12" font-weight="normal" fill="#747434" textLength="23" lengthAdjust="spacingAndGlyphs">AUTO</text><rect x="181.5" y="51.5" width="17" height="11" rx="1" fill="none" stroke="#800040" stroke-width="1"/><rect x="183" y="49" width="1" height="2" fill="#800040"/><rect x="185" y="49" width="1" height="2" fill="#800040"/><rect x="187" y="49" width="1" height="2" fill="#800040"/><rect x="189" y="49" width="1" height="2" fill="#800040"/><rect x="191" y="49" width="1" height="2" fill="#800040"/><rect x="193" y="49" width="1" height="2" fill="#800040"/><rect x="195" y="49" width="1" height="2" fill="#800040"/><rect x="197" y="49" width="1" height="2" fill="#800040"/><text x="181" y="63" font-family="Liberation Sans" font-size="13" font-weight="bold" fill="#000090" textLength="17" lengthAdjust="spacingAndGlyphs">ID</text><text x="199" y="70" font-family="Liberation Serif" font-size="12.12" font-weight="normal" fill="#747434" textLength="30" lengthAdjust="spacingAndGlyphs">CHECK</text><text x="235" y="60" font-family="Liberation Serif" font-size="13" font-weight="bold" fill="#800000" textLength="15" lengthAdjust="spacingAndGlyphs">FF</text><circle cx="248" cy="55" r="7.5" fill="none" stroke="#000" stroke-width="1.1"/><path d="M250 48 a7.5 7.5 0 0 1 5 5" stroke="#40c8d8" stroke-width="1.5" fill="none"/><path d="M237 64 l5 -4" stroke="#000" stroke-width="2"/><text x="254" y="70" font-family="Liberation Serif" font-size="12.12" font-weight="normal" fill="#747434" textLength="30" lengthAdjust="spacingAndGlyphs">BLANK</text><rect x="292" y="52" width="10" height="11" fill="none" stroke="#000060" stroke-width="2"/><rect x="298" y="48.5" width="10" height="10" fill="none" stroke="#800080" stroke-width="2"/><path d="M291 47 l4 4" stroke="#0040c0" stroke-width="1"/><path d="M296 52 l-3 0 l3 -3 Z" fill="#0040c0"/><text x="304" y="70" font-family="Liberation Serif" font-size="12.12" font-weight="normal" fill="#747434" textLength="35" lengthAdjust="spacingAndGlyphs">VERIFY</text><rect x="348" y="48.5" width="44" height="20.5" rx="4" fill="#e0ffe0" stroke="#800080" stroke-width="1.5" stroke-dasharray="1 1"/><rect x="349.5" y="50" width="41" height="17.5" rx="3" fill="none" stroke="#1a2a1a" stroke-width="1.3"/><text x="356" y="64" font-family="Liberation Serif" font-size="12.5" font-weight="bold" fill="#000" textLength="29" lengthAdjust="spacingAndGlyphs">READ</text><rect x="470" y="52" width="3.5" height="13" fill="#800000"/><rect x="465" y="56.5" width="13" height="3.5" fill="#800000"/><text x="481" y="65" font-family="Liberation Serif" font-size="12.12" font-weight="normal" fill="#747434" textLength="17" lengthAdjust="spacingAndGlyphs">ADD</text><text x="529" y="63" font-family="Liberation Sans" font-size="11" font-weight="bold" fill="#a8a8a8" textLength="24" lengthAdjust="spacingAndGlyphs">RAM</text><path d="M534 52 q7 -5 14 0" stroke="#c0c0c0" fill="none" stroke-width="1"/><path d="M534 65 q7 5 14 0" stroke="#c0c0c0" fill="none" stroke-width="1"/><rect x="574.5" y="49.5" width="17" height="19" fill="#fff8d0" stroke="#e07020" stroke-width="1.2"/><rect x="577" y="53.0" width="6" height="1" fill="#808080"/><rect x="577" y="55.2" width="6" height="1" fill="#808080"/><rect x="577" y="57.4" width="6" height="1" fill="#808080"/><rect x="577" y="59.6" width="6" height="1" fill="#808080"/><rect x="577" y="61.8" width="6" height="1" fill="#808080"/><path d="M581 66 l7 -7 l3 3 l-7 7 h-3 Z" fill="#fff" stroke="#000" stroke-width="1.2"/><text x="588" y="55.5" font-family="Liberation Serif" font-size="11.36" font-weight="normal" fill="#747434" textLength="29" lengthAdjust="spacingAndGlyphs">Erase</text><rect x="629" y="48.5" width="44" height="20.5" rx="4" fill="#e0ffe0" stroke="#800080" stroke-width="1.5" stroke-dasharray="1 1"/><rect x="630.5" y="50" width="41" height="17.5" rx="3" fill="none" stroke="#1a2a1a" stroke-width="1.3"/><text x="633" y="64" font-family="Liberation Serif" font-size="12.5" font-weight="bold" fill="#800000" textLength="37" lengthAdjust="spacingAndGlyphs">PROG.</text><rect x="695.5" y="49.5" width="21" height="19" rx="2" fill="#d8f0ff" stroke="#404080" stroke-width="1"/><rect x="696" y="47" width="1" height="2" fill="#800080"/><rect x="696" y="69" width="1" height="2" fill="#800080"/><rect x="698" y="47" width="1" height="2" fill="#800080"/><rect x="698" y="69" width="1" height="2" fill="#800080"/><rect x="700" y="47" width="1" height="2" fill="#800080"/><rect x="700" y="69" width="1" height="2" fill="#800080"/><rect x="702" y="47" width="1" height="2" fill="#800080"/><rect x="702" y="69" width="1" height="2" fill="#800080"/><rect x="704" y="47" width="1" height="2" fill="#800080"/><rect x="704" y="69" width="1" height="2" fill="#800080"/><rect x="706" y="47" width="1" height="2" fill="#800080"/><rect x="706" y="69" width="1" height="2" fill="#800080"/><rect x="708" y="47" width="1" height="2" fill="#800080"/><rect x="708" y="69" width="1" height="2" fill="#800080"/><rect x="710" y="47" width="1" height="2" fill="#800080"/><rect x="710" y="69" width="1" height="2" fill="#800080"/><rect x="712" y="47" width="1" height="2" fill="#800080"/><rect x="712" y="69" width="1" height="2" fill="#800080"/><rect x="714" y="47" width="1" height="2" fill="#800080"/><rect x="714" y="69" width="1" height="2" fill="#800080"/><rect x="693" y="50" width="2" height="1" fill="#800080"/><rect x="717" y="50" width="2" height="1" fill="#800080"/><rect x="693" y="52" width="2" height="1" fill="#800080"/><rect x="717" y="52" width="2" height="1" fill="#800080"/><rect x="693" y="54" width="2" height="1" fill="#800080"/><rect x="717" y="54" width="2" height="1" fill="#800080"/><rect x="693" y="56" width="2" height="1" fill="#800080"/><rect x="717" y="56" width="2" height="1" fill="#800080"/><rect x="693" y="58" width="2" height="1" fill="#800080"/><rect x="717" y="58" width="2" height="1" fill="#800080"/><rect x="693" y="60" width="2" height="1" fill="#800080"/><rect x="717" y="60" width="2" height="1" fill="#800080"/><rect x="693" y="62" width="2" height="1" fill="#800080"/><rect x="717" y="62" width="2" height="1" fill="#800080"/><rect x="693" y="64" width="2" height="1" fill="#800080"/><rect x="717" y="64" width="2" height="1" fill="#800080"/><rect x="693" y="66" width="2" height="1" fill="#800080"/><rect x="717" y="66" width="2" height="1" fill="#800080"/><path d="M699.0 48 v12" stroke="#c03030" stroke-width="1"/><path d="M697.5 59 h3 l-1.5 2.5 Z" fill="#c03030"/><path d="M702.5 48 v12" stroke="#c03030" stroke-width="1"/><path d="M701.0 59 h3 l-1.5 2.5 Z" fill="#c03030"/><path d="M706.0 48 v12" stroke="#c03030" stroke-width="1"/><path d="M704.5 59 h3 l-1.5 2.5 Z" fill="#c03030"/><path d="M709.5 48 v12" stroke="#c03030" stroke-width="1"/><path d="M708.0 59 h3 l-1.5 2.5 Z" fill="#c03030"/><path d="M713.0 48 v12" stroke="#c03030" stroke-width="1"/><path d="M711.5 59 h3 l-1.5 2.5 Z" fill="#c03030"/><text x="738" y="65" font-family="Liberation Serif" font-size="16" font-weight="bold" fill="#000" textLength="10" lengthAdjust="spacingAndGlyphs">?</text><text x="752" y="64" font-family="Liberation Serif" font-size="12.12" font-weight="normal" fill="#747434" textLength="29" lengthAdjust="spacingAndGlyphs">ABOUT</text><rect x="792.5" y="48.5" width="14" height="15" fill="#fff" stroke="#000" stroke-width="1.5"/><rect x="795" y="50" width="10" height="5" fill="#40a0c0"/><rect x="795" y="57" width="10" height="5" fill="#e0e0e0"/><text x="808" y="70" font-family="Liberation Serif" font-size="12.12" font-weight="normal" fill="#747434" textLength="32" lengthAdjust="spacingAndGlyphs">CALCU.</text><text x="904" y="57" font-family="Liberation Sans" font-size="9" fill="#000">A</text><text x="904" y="66" font-family="Liberation Sans" font-size="9" fill="#000">B</text><path d="M911 53.5 h5 M911 62.5 h5 M935 58 h5" stroke="#000" stroke-width="1"/><path d="M916.5 51.5 h9 a6.5 6.5 0 0 1 0 13 h-9 Z" fill="#fff" stroke="#000" stroke-width="1"/><text x="920" y="61.5" font-family="Liberation Sans" font-size="8" fill="#000">&amp;</text><text x="941" y="62" font-family="Liberation Sans" font-size="9" fill="#000">Y</text><rect x="968" y="48" width="28" height="20" fill="#a0a0a0"/><text x="974" y="63" font-family="Liberation Sans" font-size="12" font-weight="bold" fill="#fff" textLength="16" lengthAdjust="spacingAndGlyphs">TV</text><rect x="975" y="69" width="13" height="2" fill="#a0a0a0"/></svg>
<svg style="left:0;top:0" width="1920" height="140"><path d="M1741 109 h5 l11 13.5 h-5.5 Z" fill="#1c1a1a"/><path d="M1756 109 l-14.5 13.5" stroke="#1c1a1a" stroke-width="0.9"/><path d="M1766 109 a6.75 6.75 0 0 0 0 13.5 v-3 a1.4 3.75 0 0 1 0 -7.5 Z" fill="#1c1a1a"/><path d="M1766 109 a6.75 6.75 0 0 1 6 3.5 M1766 122.5 a6.75 6.75 0 0 0 6.5 -6 h-5" stroke="#1c1a1a" stroke-width="1" fill="none"/><path d="M1781.5 112 a6 5.25 0 0 0 0 10.5 v-2.4 a1.3 2.85 0 0 1 0 -5.7 Z" fill="#1c1a1a"/><path d="M1781.5 112 a6 5.25 0 0 1 6 5 h-9 M1781.5 122.5 a6 5.25 0 0 0 5.5 -3" stroke="#1c1a1a" stroke-width="1" fill="none"/><path d="M1795 112 a5.5 5.25 0 0 0 0 10.5 v-2.4 a1.3 2.85 0 0 1 0 -5.7 Z" fill="#1c1a1a"/><path d="M1795 112 a5.5 5.25 0 0 1 4 2 M1795 122.5 a5.5 5.25 0 0 0 4 -2" stroke="#1c1a1a" stroke-width="1" fill="none"/><path d="M1801 112 h4 v7 a2.5 2.5 0 0 0 5 0 v-7 h4.5 v10.5 h-4.5 v-1 a5 4 0 0 1 -4 1 a4.5 4.5 0 0 1 -5 -4.5 Z" fill="#1c1a1a"/><circle cx="1824.5" cy="107" r="5.8" fill="none" stroke="#1c1a1a" stroke-width="1"/><text x="1821.5" y="110" font-family="Liberation Sans" font-weight="bold" font-size="8" fill="#1c1a1a">R</text><path d="M1836 109 h4.5 v13.5 h-4.5 Z" fill="#1c1a1a"/><path d="M1840 109.5 h4 a4 4 0 0 1 0 8 h-4" stroke="#1c1a1a" stroke-width="1" fill="none"/><path d="M1853 112 h4.5 v10.5 h-4.5 Z" fill="#1c1a1a"/><path d="M1857 113.5 q1.5 -1.5 3 -1.5 v2.5 q-2 0 -3 1.5 Z" fill="#1c1a1a"/><path d="M1868.5 112 a5.3 5.25 0 0 0 0 10.5 v-2.4 a1.2 2.85 0 0 1 0 -5.7 Z" fill="#1c1a1a"/><path d="M1868.5 112 a5.3 5.25 0 0 1 0 10.5" stroke="#1c1a1a" stroke-width="1" fill="none"/></svg>
<svg style="left:0;top:0" width="1920" height="1080"><defs><radialGradient id="orb" cx="50%" cy="60%" r="55%"><stop offset="0" stop-color="#3a90d0"/><stop offset="0.6" stop-color="#1f5e9e"/><stop offset="0.9" stop-color="#173f70"/><stop offset="1" stop-color="#5a8fc0"/></radialGradient><linearGradient id="orbg" x1="0" y1="0" x2="0" y2="1"><stop offset="0" stop-color="rgba(255,255,255,0.75)"/><stop offset="1" stop-color="rgba(255,255,255,0.1)"/></linearGradient><linearGradient id="iee" x1="0" y1="0" x2="0" y2="1"><stop offset="0" stop-color="#7fe0ff"/><stop offset="1" stop-color="#1a78d0"/></linearGradient></defs><circle cx="27" cy="1060" r="18" fill="url(#orb)" stroke="#2a5a90" stroke-width="1"/><ellipse cx="27" cy="1052" rx="14" ry="8" fill="url(#orbg)" opacity="0.7"/><ellipse cx="27" cy="1072" rx="9" ry="4" fill="#50d0ff" opacity="0.3"/><path d="M17.5 1052 q4 -3 8 -1 l-1 7 q-4 -2 -8 1 Z" fill="#f06a28"/><path d="M27 1051 q4 2 9 -1 l-1.5 7 q-4 2 -8.5 1 Z" fill="#8cc63e"/><path d="M16 1060 q4 -3 8 -1 l-1 7 q-4 -2 -8 1 Z" fill="#3aa6e8"/><path d="M25.5 1059 q4 2 9 -1 l-1.5 7 q-4 2 -8.5 1 Z" fill="#fcc020"/><path d="M101 1063 h-20 a9 9 0 0 0 17 4 l5 0 a13.5 13.5 0 1 1 0.5 -6 Z M82 1057 a8 7 0 0 1 15 0 Z" fill="url(#iee)" fill-rule="evenodd" stroke="#1060b0" stroke-width="0.6"/><path d="M76 1073 q-6 -8 10 -20 q14 -10 17 -5 q2 4 -4 9" stroke="#f0c830" stroke-width="2.4" fill="none"/><path d="M136 1049 h9 l2 2 h19 v23 h-30 Z" fill="#f5d76e" stroke="#c8a040" stroke-width="0.8"/><rect x="136" y="1055" width="30" height="19" fill="#fbe8a0"/><path d="M141 1074 v-8 h20 v8" stroke="#6ab0e0" stroke-width="3" fill="none"/><rect x="140" y="1050" width="4" height="3" fill="#40a040"/><rect x="149" y="1051" width="4" height="3" fill="#d04040"/><rect x="156" y="1051" width="4" height="3" fill="#4070d0"/><rect x="200" y="1049" width="22" height="23" fill="#8ac8f0" stroke="#6aa8d0" stroke-width="1"/><circle cx="209" cy="1060" r="9" fill="#f07020"/><circle cx="209" cy="1060" r="7" fill="#f89040"/><path d="M206 1055 l8 5 l-8 5 Z" fill="#fff"/><path d="M275 1060 L261.1 1052.0 A16 16 0 0 1 288.9 1052.0 Z" fill="#db4437"/><path d="M275 1060 L288.9 1052.0 A16 16 0 0 1 275.0 1076.0 Z" fill="#f4b400"/><path d="M275 1060 L275.0 1076.0 A16 16 0 0 1 261.1 1052.0 Z" fill="#0f9d58"/><circle cx="275" cy="1060" r="7.2" fill="#fff"/><circle cx="275" cy="1060" r="5.6" fill="#4285f4"/><path d="M336 1059 L323.0 1051.5 A15 15 0 0 1 349.0 1051.5 Z" fill="#db4437"/><path d="M336 1059 L349.0 1051.5 A15 15 0 0 1 336.0 1074.0 Z" fill="#f4b400"/><path d="M336 1059 L336.0 1074.0 A15 15 0 0 1 323.0 1051.5 Z" fill="#0f9d58"/><circle cx="336" cy="1059" r="6.8" fill="#fff"/><circle cx="336" cy="1059" r="5.2" fill="#4285f4"/><circle cx="345" cy="1068" r="7" fill="#0b8043" stroke="#fff" stroke-width="1"/><text x="342" y="1071.5" font-family="Liberation Sans" font-size="9" fill="#fff">d</text><defs><linearGradient id="xgb" x1="0" y1="0" x2="0" y2="1"><stop offset="0" stop-color="#f4f4f8"/><stop offset="1" stop-color="#b4b4bc"/></linearGradient></defs><rect x="383.5" y="1048.5" width="31" height="23" rx="2" fill="url(#xgb)" stroke="#202020" stroke-width="1.2"/><path d="M398 1049 h16 v6 h-10 Z" fill="#2f6ee0"/><rect x="402" y="1055" width="12" height="1.5" fill="#fff"/><rect x="384" y="1061.5" width="30" height="1.2" fill="#b02020"/><circle cx="404" cy="1062" r="4.6" fill="#1040b0" stroke="#202040" stroke-width="0.8"/><circle cx="403.5" cy="1061.5" r="2" fill="#60c0ff"/><rect x="386" y="1047" width="7" height="28" fill="#f8f8f8" stroke="#000" stroke-width="1"/><rect x="387" y="1049" width="5" height="1" fill="#000"/><rect x="387" y="1051" width="5" height="1" fill="#000"/><rect x="387" y="1053" width="5" height="1" fill="#000"/><rect x="387" y="1055" width="5" height="1" fill="#000"/><rect x="387" y="1057" width="5" height="1" fill="#000"/><rect x="387" y="1059" width="5" height="1" fill="#000"/><rect x="388" y="1063" width="3" height="9" fill="#303030"/><path d="M447 1066 q-6 -12 8 -16 q14 -3 18 5 q2 5 -4 6 q-5 0 -3 5 q1 4 -6 5 q-9 2 -13 -5 Z" fill="#dce8f4" stroke="#90a8c0" stroke-width="0.8"/><circle cx="450" cy="1062" r="2" fill="#e04040"/><circle cx="454" cy="1056" r="2" fill="#50b050"/><circle cx="460" cy="1053" r="2" fill="#f0c040"/><circle cx="458" cy="1063" r="2" fill="#80a8d0"/><path d="M460 1074 l12 -22" stroke="#d08030" stroke-width="3"/><path d="M470 1054 l5 -8 l3 2 Z" fill="#e0b070"/><path d="M1733 1063 l4 -4 l4 4 Z" fill="#fff"/><rect x="1755" y="1052" width="1.5" height="17" fill="#fff"/><path d="M1757 1053 h8 l-2 3 l2 3 h-8 Z" fill="#fff"/><circle cx="1765" cy="1065" r="4" fill="#e03030" stroke="#fff" stroke-width="0.8"/><path d="M1763 1063 l4 4 M1767 1063 l-4 4" stroke="#fff" stroke-width="1"/><rect x="1779" y="1063.0" width="2" height="3.0" fill="#fff"/><rect x="1782" y="1060.5" width="2" height="5.5" fill="#fff"/><rect x="1785" y="1058.0" width="2" height="8.0" fill="#fff"/><rect x="1788" y="1055.5" width="2" height="10.5" fill="#fff"/><rect x="1791" y="1053.0" width="2" height="13.0" fill="#fff"/><path d="M1802 1056 h3 l5 -4 v16 l-5 -4 h-3 Z" fill="#fff"/><path d="M1812 1056 q2 4 0 8 M1815 1054 q3 6 0 12" stroke="#fff" stroke-width="1" fill="none"/></svg>
</body></html>
